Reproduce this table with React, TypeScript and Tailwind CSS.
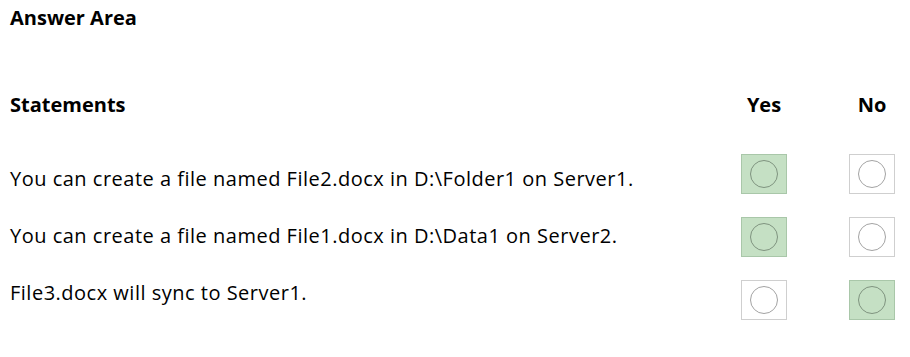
const rows = [
  { text: "You can create a file named File2.docx in D:\\Folder1 on Server1.", yes: true },
  { text: "You can create a file named File1.docx in D:\\Data1 on Server2.", yes: true },
  { text: "File3.docx will sync to Server1.", yes: false },
];

function Choice({ selected }: { selected: boolean }) {
  return (
    <div
      className={
        selected
          ? "flex h-[40px] w-[46px] items-center justify-center border border-[#a9c7a9] bg-[#c5e0c4]"
          : "flex h-[40px] w-[46px] items-center justify-center border border-[#cfcfcf] bg-white"
      }
    >
      <div
        className={
          selected
            ? "h-[28px] w-[28px] rounded-full border border-[#7f937f]"
            : "h-[28px] w-[28px] rounded-full border border-[#a3a3a3]"
        }
      />
    </div>
  );
}

export default function App() {
  return (
    <div className="h-[357px] w-[910px] bg-white pl-[10px] pr-[15px] pt-[6px] font-['Open_Sans','Liberation_Sans',sans-serif] text-black">
      <h1 className="text-[20px] font-bold leading-[24px]">Answer Area</h1>

      {/* header */}
      <div className="mt-[63px] flex h-[24px] items-center text-[20px] font-bold leading-[24px]">
        <div className="flex-1">Statements</div>
        <div className="w-[46px] text-center">Yes</div>
        <div className="ml-[62px] w-[46px] text-center">No</div>
      </div>

      {/* statements + answers */}
      <div className="mt-[37px] flex items-start">
        <div className="flex flex-1 flex-col gap-[33px] pt-[13px] text-[20px] leading-[24px] tracking-[0.5px]">
          {rows.map((r) => (
            <div key={r.text}>{r.text}</div>
          ))}
        </div>
        <div className="flex flex-col gap-[23px]">
          {rows.map((r) => (
            <Choice key={r.text} selected={r.yes} />
          ))}
        </div>
        <div className="ml-[62px] flex flex-col gap-[23px]">
          {rows.map((r) => (
            <Choice key={r.text} selected={!r.yes} />
          ))}
        </div>
      </div>
    </div>
  );
}
